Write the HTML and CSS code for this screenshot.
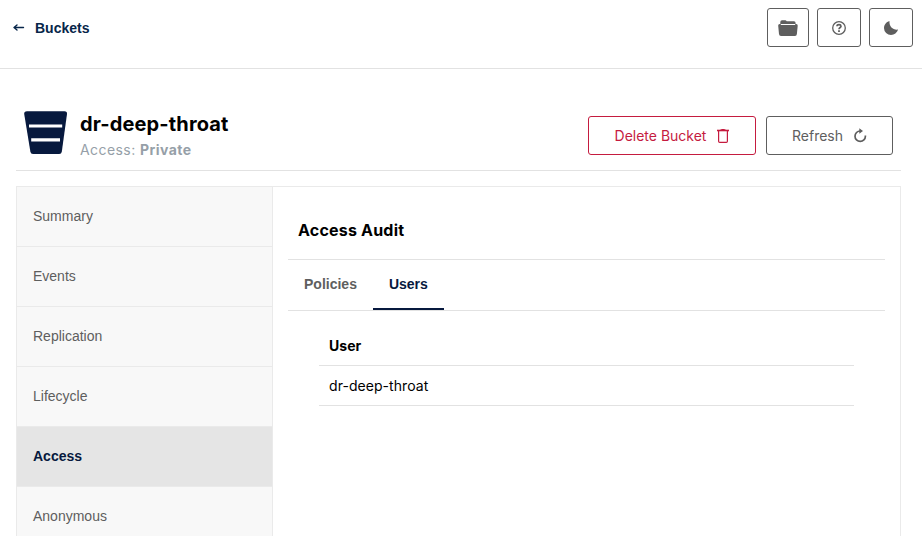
FILE: index.html
```html
<!DOCTYPE html>
<html lang="en">
<head>
<meta charset="utf-8">
<title>dr-deep-throat</title>
<link rel="stylesheet" href="styles.css">
</head>
<body>
<header class="topbar">
  <a class="back">
    <svg width="12" height="8" viewBox="0 0 12 8" fill="none" stroke="currentColor" stroke-width="1.400" stroke-linecap="round" stroke-linejoin="round"><path d="M10.500 3.500H1.500M4 1L1 3.500L4 6" /></svg>
    <span>Buckets</span>
  </a>
  <div class="tools">
    <button class="btn tool folder" aria-label="Objects">
      <svg width="20" height="16" viewBox="0 0 20 16" fill="currentColor"><path d="M2.300 4V2Q2.300 .2 4 .2H7.200Q8.200 .2 8.700 1.300H16Q17.600 1.300 17.600 2.900V4Z"/><path d="M1.700 4Q.1 4 .2 5.800L1 14Q1.200 15.900 3 15.900H17Q18.700 15.900 18.900 14L19.700 5.800Q19.800 4 18.200 4Z"/><path d="M2.800 4.500H17.200" fill="none" stroke="#fff"/></svg>
    </button>
    <button class="btn tool" aria-label="Help">
      <svg width="14" height="14" viewBox="0 0 14 14" fill="none" stroke="currentColor" stroke-width="1.300"><circle cx="7" cy="7" r="6.300"/><path d="M5 5.300Q5.100 3.700 7 3.700T9 5.300C9 6.500 7 6.600 7 8.300" stroke-width="1.700"/><path d="M7 9.200V11" stroke-width="1.800"/></svg>
    </button>
    <button class="btn tool" aria-label="Dark mode">
      <svg width="14" height="14" viewBox="0 0 14 14" fill="currentColor"><path d="M5.500 0C5 4.700 8.400 9.300 14 8.600C13 11.800 10.400 14 7 14A7 7 0 0 1 0 7.200C0 3.800 2.200 .9 5.500 0Z"/></svg>
    </button>
  </div>
</header>
<main class="page">
  <section class="title-bar">
    <svg class="bucket" width="44" height="44" viewBox="0 0 44 44"><path d="M3 .2H40.500Q43.300 .2 43 3L37.800 40.800Q37.400 43 35.200 43H9Q6.800 43 6.400 40.800L.2 3Q0 .2 3 .2Z" fill="#07193e"/><path d="M5 15H38.200M7.200 28.800H36" stroke="#fff" stroke-width="3.200"/></svg>
    <div class="titles">
      <h1>dr-deep-throat</h1>
      <p>Access: <b>Private</b></p>
    </div>
    <div class="actions">
      <button class="btn danger"><span>Delete Bucket</span>
        <svg width="12" height="14" viewBox="0 0 12 14" fill="none" stroke="currentColor"><path d="M0 1.500H12" stroke-width="1.600"/><path d="M3.500 1.500Q3.500 .5 4.500 .5H7.500Q8.500 .5 8.500 1.500"/><path d="M1.600 2V12.300Q1.600 13.400 2.700 13.400H9.300Q10.400 13.400 10.400 12.300V2" stroke-width="1.200"/></svg>
      </button>
      <button class="btn refresh"><span>Refresh</span>
        <svg width="13" height="15" viewBox="0 0 13 15" fill="none" stroke="currentColor" stroke-width="1.700"><path d="M7 3H6.200A5.200 5.200 0 1 0 11.400 8.200V7.400"/><path d="M5.300 .2L9 3L5.300 5.800Z" fill="currentColor" stroke="none"/></svg>
      </button>
    </div>
  </section>
  <section class="panel">
    <nav class="side">
      <a>Summary</a>
      <a>Events</a>
      <a>Replication</a>
      <a>Lifecycle</a>
      <a class="active">Access</a>
      <a>Anonymous</a>
    </nav>
    <div class="content">
      <h2>Access Audit</h2>
      <div class="tabs"><a>Policies</a><a class="current">Users</a></div>
      <div class="table">
        <div class="row head">User</div>
        <div class="row">dr-deep-throat</div>
      </div>
    </div>
  </section>
</main>
</body>
</html>
```
FILE: styles.css
```css
* { box-sizing: border-box; }
body {
  margin: 0;
  height: 536px;
  overflow: hidden;
  background: #fff;
  color: #000;
  font: 14px/20px Inter, "Liberation Sans", sans-serif;
}
h1, h2, p { margin: 0; }
svg { display: block; flex: none; }
.topbar {
  display: flex;
  justify-content: space-between;
  align-items: flex-start;
  height: 69px;
  padding: 8px 9px 0 13px;
  border-bottom: 1px solid #e2e2e2;
}
.back {
  display: flex;
  align-items: center;
  gap: 10px;
  height: 40px;
  color: #07264a;
  font: bold 14px/20px "Liberation Sans", sans-serif;
}
.tools { display: flex; gap: 8px; }
.btn {
  display: flex;
  align-items: center;
  justify-content: center;
  height: 39px;
  padding: 0;
  border: 1px solid #5e5e5e;
  border-radius: 3px;
  background: #fff;
  color: #5e5e5e;
  font: 14px/20px Inter, sans-serif;
}
.tool { width: 44px; }
.folder { width: 42px; }
.page { height: 467px; padding: 35px 21px 0 16px; }
.title-bar {
  display: flex;
  height: 67px;
  padding: 7px 8px 0;
  border-bottom: 1px solid #e2e2e2;
}
.titles { margin-left: 12px; }
h1 { font-size: 20px; line-height: 26px; letter-spacing: .13px; }
.titles p { color: #969fa8; line-height: 26px; letter-spacing: .43px; }
.actions { display: flex; gap: 10px; margin: 5px 0 0 auto; }
.danger { width: 168px; gap: 11px; border-color: #c51b3f; color: #c51b3f; }
.refresh { width: 127px; gap: 11px; }
.panel {
  display: grid;
  grid-template-columns: 256px 1fr;
  height: 350px;
  margin-top: 15px;
  border: 1px solid #eaeaea;
  border-bottom: 0;
}
.side { background: #f8f8f8; border-right: 1px solid #eaeaea; }
.side a {
  display: block;
  height: 60px;
  padding: 19px 16px 0;
  border-bottom: 1px solid #eaeaea;
  color: #5e5e5e;
  font: 14px/20px "Liberation Sans", sans-serif;
}
.side .active { background: #e5e5e5; color: #07193e; font-weight: bold; }
.side a:last-child { height: 49px; border-bottom: 0; }
.content { padding: 15px 15px 0; }
h2 {
  height: 57px;
  padding: 18px 10px 0;
  font-size: 16px;
  line-height: 20px;
  letter-spacing: .2px;
}
.tabs {
  display: flex;
  height: 52px;
  border: solid #e2e2e2;
  border-width: 1px 0;
}
.tabs a {
  height: 50px;
  padding: 14px 16px 0;
  color: #5e5e5e;
  font: bold 14px/20px "Liberation Sans", sans-serif;
}
.tabs .current { border-bottom: 2px solid #07193e; color: #07193e; }
.table { margin: 15px 31px 0; }
.row {
  height: 40px;
  padding: 10px 10px 0;
  border-bottom: 1px solid #e2e2e2;
  letter-spacing: .06px;
}
.head { font-weight: bold; }
```
